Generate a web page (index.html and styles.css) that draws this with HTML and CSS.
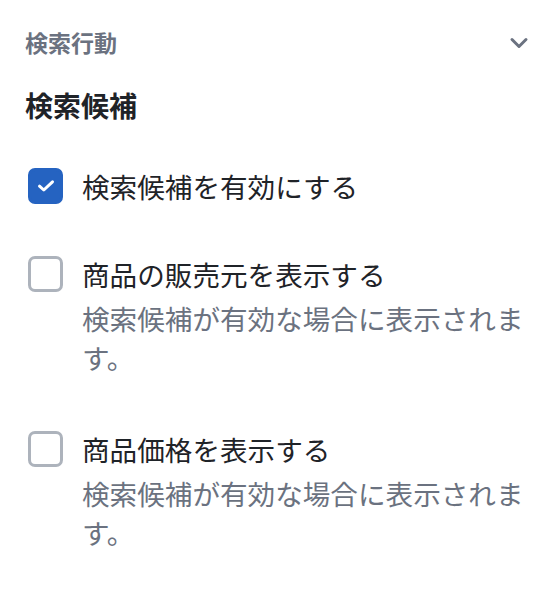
FILE: index.html
```html
<!DOCTYPE html>
<html lang="ja">
<head>
<meta charset="utf-8">
<link rel="stylesheet" href="styles.css">
</head>
<body>
<div class="panel">
  <div class="section-head">
    <span class="section-title">検索行動</span>
    <svg class="chevron" width="20" height="12" viewBox="0 0 20 12" aria-hidden="true">
      <path d="M3 2.5 L10 9.5 L17 2.5" fill="none" stroke="#6b7280" stroke-width="3" stroke-linecap="round" stroke-linejoin="round"/>
    </svg>
  </div>
  <h2 class="group-title">検索候補</h2>
  <div class="options">
    <label class="option">
      <span class="box checked">
        <svg width="18" height="14" viewBox="0 0 18 14" aria-hidden="true">
          <path d="M2.5 7.2 L6.8 11 L15.5 2.8" fill="none" stroke="#fff" stroke-width="3" stroke-linecap="round" stroke-linejoin="round"/>
        </svg>
      </span>
      <span class="text">
        <span class="label">検索候補を有効にする</span>
      </span>
    </label>
    <label class="option">
      <span class="box"></span>
      <span class="text">
        <span class="label">商品の販売元を表示する</span>
        <span class="desc">検索候補が有効な場合に表示されます。</span>
      </span>
    </label>
    <label class="option">
      <span class="box"></span>
      <span class="text">
        <span class="label">商品価格を表示する</span>
        <span class="desc">検索候補が有効な場合に表示されます。</span>
      </span>
    </label>
  </div>
</div>
</body>
</html>
```

FILE: styles.css
```css
* { box-sizing: border-box; }

html, body {
  margin: 0;
  padding: 0;
  background: #ffffff;
}

body {
  font-family: "Noto Sans CJK JP", "Noto Sans", sans-serif;
  color: #1f2328;
}

.panel {
  padding: 24px 28px 0 25px;
}

.section-head {
  display: flex;
  align-items: center;
  justify-content: space-between;
  height: 36px;
}

.section-title {
  font-size: 23px;
  line-height: 36px;
  font-weight: 600;
  color: #6b7280;
}

.chevron {
  margin-right: 3px;
  margin-top: 1px;
}

.group-title {
  margin: 25px 0 0 0;
  font-size: 28px;
  line-height: 40px;
  font-weight: 700;
  color: #1f2328;
}

.options {
  display: flex;
  flex-direction: column;
  gap: 48px;
  margin-top: 41px;
}

.option {
  display: flex;
  align-items: flex-start;
  gap: 19px;
}

.box {
  flex: 0 0 auto;
  width: 35px;
  height: 36px;
  margin-top: 2px;
  margin-left: 3px;
  border: 3px solid #adb3bc;
  border-radius: 7px;
  display: flex;
  align-items: center;
  justify-content: center;
  background: #ffffff;
}

.box.checked {
  background: #2563c1;
  border-color: #2563c1;
}

.text {
  display: flex;
  flex-direction: column;
  min-width: 0;
}

.label {
  font-size: 27.6px;
  line-height: 40px;
  color: #1f2328;
}

.desc {
  font-size: 27.6px;
  line-height: 39px;
  color: #6b7280;
  padding-top: 5px;
  padding-bottom: 4px;
}
```
